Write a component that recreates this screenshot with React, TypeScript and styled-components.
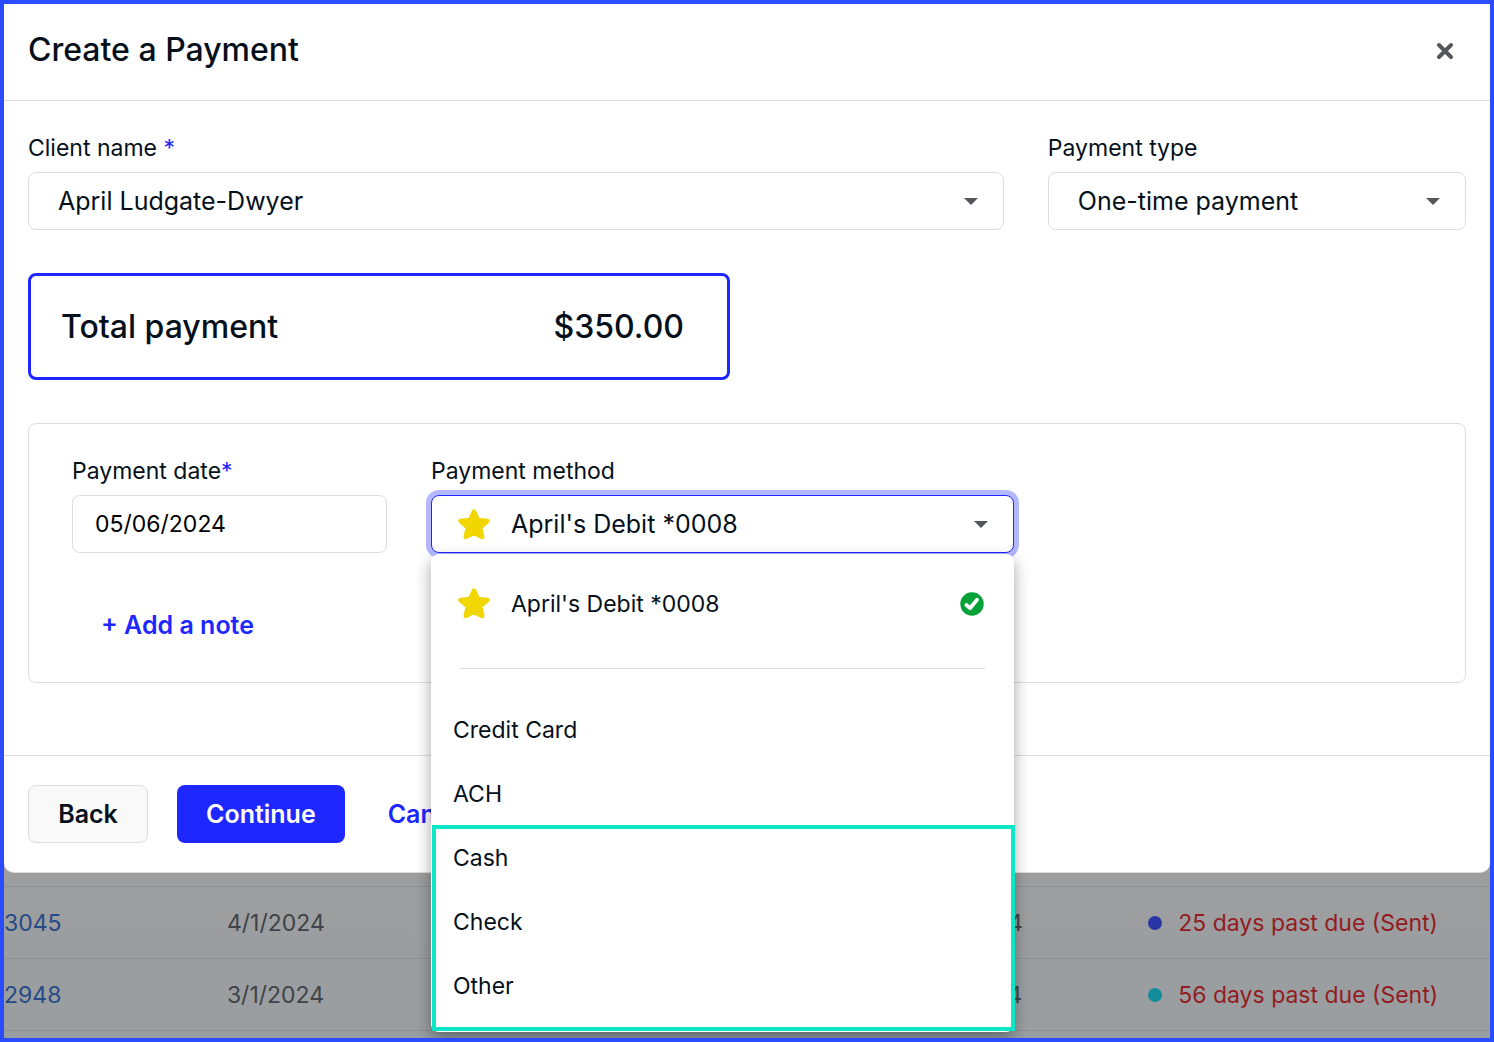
import React, { useState } from "react";
import styled, { createGlobalStyle, css } from "styled-components";

const GlobalStyle = createGlobalStyle`
  *, *::before, *::after { box-sizing: border-box; }
  body { margin: 0; }
  body, button, input, select {
    font-family: Inter, "Liberation Sans", sans-serif;
    color: #05101a;
  }
`;

const line = "#dcddde";
const blue = "#1f27ff";

const Frame = styled.div`
  height: 100vh;
  min-height: 920px;
  overflow: hidden;
  border: 4px solid #2b4bff;
  background: linear-gradient(#9e9e9f 870px, #9a9ea1 960px);
`;

const Modal = styled.section`
  position: relative;
  z-index: 1;
  background: #fff;
  border-bottom: 1px solid ${line};
  border-radius: 0 0 10px 10px;
`;

const Header = styled.header`
  display: flex;
  align-items: center;
  justify-content: space-between;
  height: 97px;
  padding: 0 24px 2px;
  border-bottom: 1px solid ${line};
`;

const Title = styled.h1`
  margin: 0;
  padding-bottom: 2px;
  font-size: 32px;
  line-height: 40px;
  font-weight: 500;
`;

const CloseButton = styled.button`
  display: flex;
  padding: 12px;
  border: 0;
  background: none;
  cursor: pointer;
`;

const Body = styled.form`
  display: flex;
  flex-direction: column;
  gap: 43px;
  padding: 31px 24px 72px;
`;

const FieldRow = styled.div<{ $columns: string }>`
  display: grid;
  grid-template-columns: ${(p) => p.$columns};
  column-gap: 44px;
`;

const Field = styled.div`
  display: flex;
  flex-direction: column;
  gap: 8px;
  min-width: 0;
`;

const labelText = css`
  font-size: 23px;
  line-height: 32px;
`;

const Label = styled.label`
  ${labelText}
`;

const Required = styled.span`
  color: ${blue};
`;

const ControlWrap = styled.div`
  position: relative;
`;

const control = css`
  width: 100%;
  height: 58px;
  border: 1px solid ${line};
  border-radius: 8px;
  background: #fff;
  outline: none;
`;

const Select = styled.select`
  ${control}
  appearance: none;
  display: block;
  padding: 0 56px 0 29px;
  font-size: 25px;
`;

const DateInput = styled.input`
  ${control}
  padding: 0 22px;
  font-size: 23px;
  color: #000;
`;

const Caret = styled.span`
  position: absolute;
  top: 26px;
  right: 26px;
  border: solid transparent;
  border-width: 7px 7px 0;
  border-top-color: #54565b;
  pointer-events: none;
`;

const Total = styled.div`
  display: flex;
  align-items: center;
  justify-content: space-between;
  width: 702px;
  max-width: 100%;
  height: 107px;
  padding: 0 43px 0 30px;
  border: 3px solid ${blue};
  border-radius: 8px;
  font-size: 32px;
  line-height: 40px;
  font-weight: 500;
`;

const Card = styled.div`
  display: flex;
  flex-direction: column;
  align-items: stretch;
  gap: 43px;
  padding: 31px 43px 28px;
  border: 1px solid ${line};
  border-radius: 8px;
`;

const MethodButton = styled.button`
  ${control}
  display: flex;
  align-items: center;
  gap: 21px;
  padding: 0 26px;
  border-color: ${blue};
  box-shadow: 0 0 0 5px #b4b8ff;
  font-size: 25px;
  cursor: pointer;

  & > svg {
    margin-top: 2px;
  }
`;

const Menu = styled.div`
  position: absolute;
  top: 59px;
  left: 0;
  right: 0;
  z-index: 2;
  padding: 18px 0 14px;
  border-radius: 8px;
  background: #fff;
  box-shadow: 0 6px 16px rgba(0, 0, 0, 0.36);
`;

const Option = styled.div<{ $saved?: boolean }>`
  display: flex;
  align-items: center;
  gap: 21px;
  height: 64px;
  padding: ${(p) => (p.$saved ? "0 30px 0 27px" : "0 22px")};
  ${labelText}
  cursor: pointer;

  & > svg:last-child:not(:first-child) {
    margin-left: auto;
  }
`;

const Divider = styled.hr`
  height: 1px;
  margin: 32px 29px 29px;
  border: 0;
  background: ${line};
`;

const Highlighted = styled.div`
  position: relative;

  &::after {
    content: "";
    position: absolute;
    inset: -1px -1px -13px 1px;
    border: 4px solid #0ee6c8;
    pointer-events: none;
  }
`;

const Actions = styled.div`
  display: flex;
`;

const Button = styled.button<{ $kind: "plain" | "primary" | "link"; $tight?: boolean }>`
  height: 58px;
  min-width: 120px;
  padding: 0 ${(p) => (p.$tight ? 13 : 28)}px;
  border: 1px solid transparent;
  border-radius: 8px;
  font-size: 25px;
  font-weight: 600;
  text-align: ${(p) => (p.$kind === "link" ? "left" : "center")};
  white-space: nowrap;
  cursor: pointer;
  ${(p) =>
    p.$kind === "primary"
      ? css`background: ${blue}; color: #fff;`
      : p.$kind === "link"
      ? css`background: none; color: ${blue};`
      : css`background: #f9f9fa; border-color: ${line};`}
`;

const Footer = styled.footer`
  display: flex;
  gap: 29px;
  padding: 29px 24px;
  border-top: 1px solid ${line};
`;

const Invoices = styled.table`
  width: 100%;
  margin-top: 13px;
  table-layout: fixed;
  border-collapse: separate;
  border-spacing: 0;
  border-top: 1px solid #8c9093;
  ${labelText}
`;

const Cell = styled.td`
  height: 72px;
  padding: 0;
  border-bottom: 1px solid #8c9093;
  color: #404348;
  white-space: nowrap;
`;

const InvoiceLink = styled.a`
  color: #264a86;
  text-decoration: none;
`;

const Status = styled.span<{ $dot: string }>`
  display: flex;
  align-items: center;
  gap: 16px;
  color: #921c1f;

  &::before {
    content: "";
    width: 14px;
    height: 14px;
    border-radius: 50%;
    background: ${(p) => p.$dot};
  }
`;

const Star = () => (
  <svg width="32" height="32" viewBox="0 0 32 32" aria-hidden="true">
    <path
      d="M16 2.6 L19.8 11 L29.4 12 L22.2 18.4 L24.2 28 L16 23.8 L7.8 28 L9.8 18.4 L2.6 12 L12.2 11 Z"
      fill="#f2d600"
      stroke="#f2d600"
      strokeWidth="4.6"
      strokeLinejoin="round"
    />
  </svg>
);

const Check = () => (
  <svg width="24" height="24" viewBox="0 0 24 24" aria-hidden="true">
    <circle cx="12" cy="12" r="11.7" fill="#04a038" />
    <path d="M6.4 13 L10 16.2 L17 7.8" fill="none" stroke="#fff" strokeWidth="3.8" strokeLinecap="round" strokeLinejoin="round" />
  </svg>
);

const Cross = () => (
  <svg width="18" height="18" viewBox="0 0 18 18" aria-hidden="true">
    <path d="M3 3 L15 15 M15 3 L3 15" stroke="#54565b" strokeWidth="4" strokeLinecap="round" />
  </svg>
);

const invoices = [
  { id: "3045", date: "4/1/2024", due: "4/10/2024", dot: "#2a35a6", status: "25 days past due (Sent)" },
  { id: "2948", date: "3/1/2024", due: "3/10/2024", dot: "#118c98", status: "56 days past due (Sent)" },
];

export default function App() {
  const [open, setOpen] = useState(true);
  const [date, setDate] = useState("05/06/2024");

  return (
    <Frame>
      <GlobalStyle />
      <Modal role="dialog" aria-labelledby="title">
        <Header>
          <Title id="title">Create a Payment</Title>
          <CloseButton aria-label="Close">
            <Cross />
          </CloseButton>
        </Header>
        <Body>
          <FieldRow $columns="7fr 3fr">
            <Field>
              <Label htmlFor="client">
                Client name <Required>*</Required>
              </Label>
              <ControlWrap>
                <Select id="client">
                  <option>April Ludgate-Dwyer</option>
                </Select>
                <Caret />
              </ControlWrap>
            </Field>
            <Field>
              <Label htmlFor="type">Payment type</Label>
              <ControlWrap>
                <Select id="type">
                  <option>One-time payment</option>
                </Select>
                <Caret />
              </ControlWrap>
            </Field>
          </FieldRow>
          <Total>
            <span>Total payment</span>
            <span>$350.00</span>
          </Total>
          <Card>
            <FieldRow $columns="minmax(0, 315px) minmax(0, 583px)">
              <Field>
                <Label htmlFor="date">
                  Payment date<Required>*</Required>
                </Label>
                <DateInput id="date" value={date} onChange={(e) => setDate(e.target.value)} />
              </Field>
              <Field>
                <Label htmlFor="method">Payment method</Label>
                <ControlWrap>
                  <MethodButton
                    id="method"
                    type="button"
                    aria-haspopup="listbox"
                    aria-expanded={open}
                    onClick={() => setOpen(!open)}
                  >
                    <Star />
                    April's Debit *0008
                  </MethodButton>
                  <Caret />
                  {open && (
                    <Menu role="listbox" aria-label="Payment method">
                      <Option role="option" aria-selected="true" $saved>
                        <Star />
                        <span>April's Debit *0008</span>
                        <Check />
                      </Option>
                      <Divider />
                      <Option role="option">Credit Card</Option>
                      <Option role="option">ACH</Option>
                      <Highlighted>
                        <Option role="option">Cash</Option>
                        <Option role="option">Check</Option>
                        <Option role="option">Other</Option>
                      </Highlighted>
                    </Menu>
                  )}
                </ControlWrap>
              </Field>
            </FieldRow>
            <Actions>
              <Button type="button" $kind="link">+ Add a note</Button>
            </Actions>
          </Card>
        </Body>
        <Footer>
          <Button type="button" $kind="plain">Back</Button>
          <Button type="button" $kind="primary">Continue</Button>
          <Button type="button" $kind="link" $tight>Cancel</Button>
        </Footer>
      </Modal>
      <Invoices>
        <colgroup>
          <col style={{ width: "15%" }} />
          <col style={{ width: "46%" }} />
          <col />
          <col style={{ width: "23%" }} />
        </colgroup>
        <tbody>
          {invoices.map((row) => (
            <tr key={row.id}>
              <Cell>
                <InvoiceLink href="#">{row.id}</InvoiceLink>
              </Cell>
              <Cell>{row.date}</Cell>
              <Cell>{row.due}</Cell>
              <Cell>
                <Status $dot={row.dot}>{row.status}</Status>
              </Cell>
            </tr>
          ))}
        </tbody>
      </Invoices>
    </Frame>
  );
}
